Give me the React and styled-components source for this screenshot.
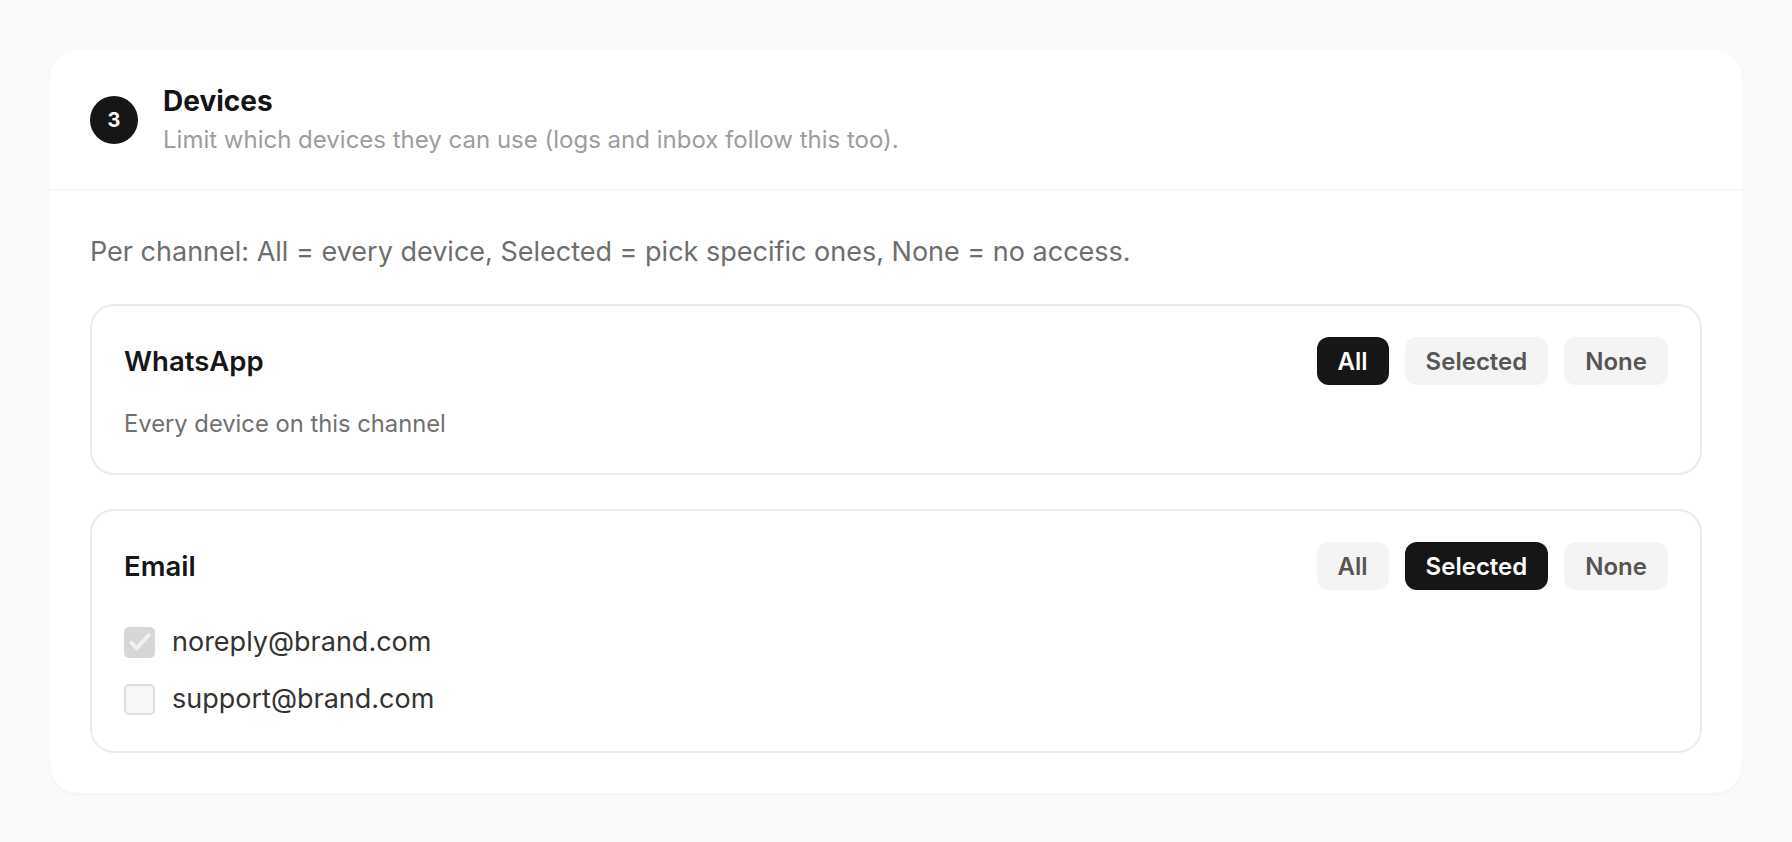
import React, { useState } from 'react'
import styled, { createGlobalStyle } from 'styled-components'

const GlobalStyle = createGlobalStyle`
  * {
    box-sizing: border-box;
  }
  body {
    margin: 0;
    background: #fafafa;
    font-family: Inter, "Noto Sans", sans-serif;
    -webkit-font-smoothing: antialiased;
  }
`

const Page = styled.div`
  padding: 50px;
`

const Panel = styled.section`
  background: #fff;
  border-radius: 28px;
  box-shadow: 0 1px 4px rgb(0 0 0 / 4%);
`

const PanelHeader = styled.header`
  display: flex;
  align-items: center;
  gap: 25px;
  padding: 33px 40px 32px;
  border-bottom: 1px solid #f1f1f1;
`

const StepBadge = styled.div`
  flex: none;
  display: flex;
  align-items: center;
  justify-content: center;
  width: 48px;
  height: 48px;
  border-radius: 50%;
  background: #161616;
  color: #fff;
  font-size: 20px;
  font-weight: 700;
`

const HeaderText = styled.div`
  display: flex;
  flex-direction: column;
  gap: 4px;
`

const Title = styled.h2`
  margin: 0;
  font-size: 28px;
  line-height: 36px;
  font-weight: 700;
  color: #141414;
`

const Subtitle = styled.p`
  margin: 0;
  font-size: 24px;
  line-height: 34px;
  color: #9d9d9d;
`

const PanelBody = styled.div`
  display: flex;
  flex-direction: column;
  gap: 34px;
  padding: 42px 40px 40px;
`

const Hint = styled.p`
  margin: 0 0 -1px;
  font-size: 27px;
  line-height: 39px;
  color: #6e6e6e;
`

const Channel = styled.div`
  display: flex;
  flex-direction: column;
  gap: ${p => p.$gap}px;
  padding: 31px 32px 32px;
  border: 2px solid #ebebeb;
  border-radius: 24px;
`

const ChannelTop = styled.div`
  display: flex;
  align-items: center;
  justify-content: space-between;
`

const ChannelName = styled.h3`
  margin: 0;
  font-size: 27.5px;
  font-weight: 600;
  color: #161616;
`

const Segments = styled.div`
  display: flex;
  gap: 16px;
`

const Segment = styled.button`
  height: 48px;
  padding: 0 21px;
  border: none;
  border-radius: 12px;
  font-family: inherit;
  font-size: 24px;
  font-weight: 600;
  cursor: pointer;
  background: ${p => (p.$active ? '#161616' : '#f4f4f4')};
  color: ${p => (p.$active ? '#fff' : '#555')};
`

const Description = styled.p`
  margin: 0;
  font-size: 23.75px;
  line-height: 34px;
  color: #707070;
`

const DeviceList = styled.div`
  display: flex;
  flex-direction: column;
  gap: 17px;
`

const DeviceRow = styled.label`
  display: flex;
  align-items: center;
  gap: 17px;
  font-size: 27px;
  line-height: 40px;
  color: #333;
`

const Box = styled.span`
  flex: none;
  display: flex;
  align-items: center;
  justify-content: center;
  width: 31px;
  height: 31px;
  border-radius: 5px;
  background: ${p => (p.$checked ? '#d6d6d6' : '#f7f7f7')};
  border: ${p => (p.$checked ? 'none' : '2px solid #dedede')};
`

const OPTIONS = ['All', 'Selected', 'None']

function Check() {
  return (
    <svg width="26" height="26" viewBox="0 0 24 24" fill="none">
      <path d="M4 12.5l5 5.5L20 5.5" stroke="#f2f2f2" strokeWidth="3.6" strokeLinecap="round" strokeLinejoin="round" />
    </svg>
  )
}

function SegmentPicker({ value, onChange }) {
  return (
    <Segments>
      {OPTIONS.map(o => (
        <Segment key={o} $active={value === o} onClick={() => onChange(o)}>
          {o}
        </Segment>
      ))}
    </Segments>
  )
}

export default function App() {
  const [whatsapp, setWhatsapp] = useState('All')
  const [email, setEmail] = useState('Selected')
  const devices = [
    { address: 'noreply@brand.com', checked: true },
    { address: 'support@brand.com', checked: false }
  ]

  return (
    <Page>
      <GlobalStyle />
      <Panel>
        <PanelHeader>
          <StepBadge>3</StepBadge>
          <HeaderText>
            <Title>Devices</Title>
            <Subtitle>Limit which devices they can use (logs and inbox follow this too).</Subtitle>
          </HeaderText>
        </PanelHeader>
        <PanelBody>
          <Hint>Per channel: All = every device, Selected = pick specific ones, None = no access.</Hint>
          <Channel $gap={22}>
            <ChannelTop>
              <ChannelName>WhatsApp</ChannelName>
              <SegmentPicker value={whatsapp} onChange={setWhatsapp} />
            </ChannelTop>
            <Description>Every device on this channel</Description>
          </Channel>
          <Channel $gap={32}>
            <ChannelTop>
              <ChannelName>Email</ChannelName>
              <SegmentPicker value={email} onChange={setEmail} />
            </ChannelTop>
            <DeviceList>
              {devices.map(d => (
                <DeviceRow key={d.address}>
                  <Box $checked={d.checked}>{d.checked && <Check />}</Box>
                  {d.address}
                </DeviceRow>
              ))}
            </DeviceList>
          </Channel>
        </PanelBody>
      </Panel>
    </Page>
  )
}
